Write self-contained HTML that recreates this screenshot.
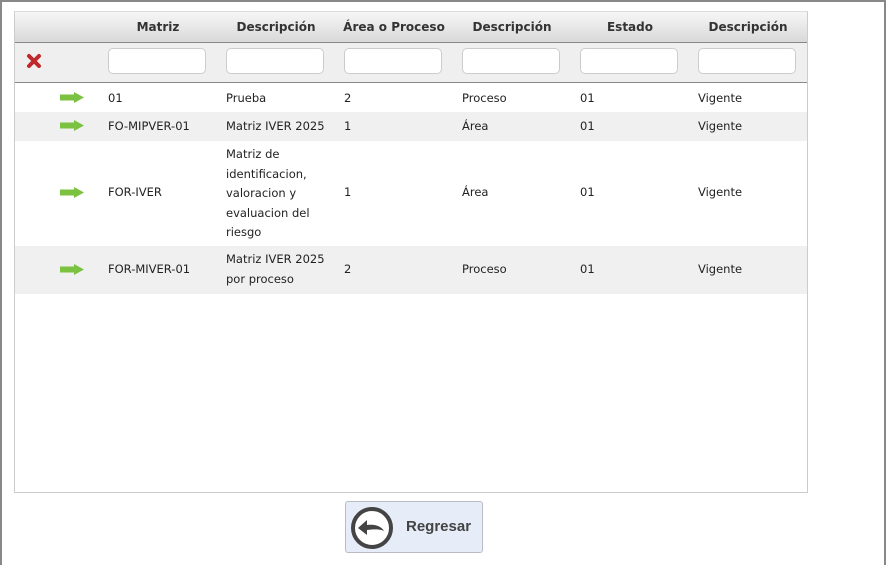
<!DOCTYPE html>
<html><head><meta charset="utf-8"><style>
*{box-sizing:border-box;margin:0;padding:0}
body{width:886px;height:565px;background:#fff;font-family:"DejaVu Sans",Verdana,sans-serif;font-size:11.5px;color:#222;position:relative;overflow:hidden}
.frame{position:absolute;left:0;top:0;width:886px;height:565px;border-top:2px solid #888;border-left:2px solid #888;border-right:2px solid #888}
.tbl{position:absolute;left:14px;top:11px;width:794px;height:482px;border:1px solid #ccc;border-top:1px solid #ddd}
.hdr{position:absolute;left:0;top:0;width:792px;height:31px;background:linear-gradient(#f6f6f6,#d9d9d9);border-bottom:1px solid #888}
.hdr span{position:absolute;top:8px;font-weight:bold;font-size:12px;color:#333;width:118px;text-align:center}
.flt{position:absolute;left:0;top:31px;width:792px;height:40px;background:#efefef;border-bottom:1px solid #888}
.flt .in{position:absolute;top:5px;width:98px;height:26px;background:#fff;border:1px solid #ccc;border-radius:5px}
.row{position:absolute;left:0;width:792px}
.row span{position:absolute;line-height:19.5px}
.g{background:#f0f0f0}
.arr{position:absolute;left:45px;width:24px;height:11px}
.btn{position:absolute;left:345px;top:501px;width:138px;height:52px;background:#e6ecf8;border:1px solid #b9bcc4;border-radius:3px}
.btn b{position:absolute;left:60px;top:16px;font-family:"Liberation Sans",Arial,sans-serif;font-size:15px;color:#444}
</style></head><body>
<div class="frame"></div>
<div class="tbl">
<div class="hdr">
<span style="left:84px">Matriz</span><span style="left:202px">Descripción</span><span style="left:320px">Área o Proceso</span><span style="left:438px">Descripción</span><span style="left:556px">Estado</span><span style="left:674px">Descripción</span>
</div>
<div class="flt">
<svg style="position:absolute;left:11px;top:10px" width="16" height="16" viewBox="0 0 16 16"><path d="M3 3L13 13M13 3L3 13" stroke="#c0282a" stroke-width="4" stroke-linecap="round"/></svg>
<div class="in" style="left:93px"></div><div class="in" style="left:211px"></div><div class="in" style="left:329px"></div><div class="in" style="left:447px"></div><div class="in" style="left:565px"></div><div class="in" style="left:683px"></div>
</div>
<div class="row" style="top:72px;height:28px">
<svg class="arr" style="top:8px" viewBox="0 0 24 11"><path d="M0 2.5H14V0L24 5.5L14 11V8.5H0Z" fill="#7bc241"/></svg>
<span style="left:93px;top:5px">01</span><span style="left:211px;top:5px">Prueba</span><span style="left:329px;top:5px">2</span><span style="left:447px;top:5px">Proceso</span><span style="left:565px;top:5px">01</span><span style="left:683px;top:5px">Vigente</span></div>
<div class="row g" style="top:100px;height:29px">
<svg class="arr" style="top:8px" viewBox="0 0 24 11"><path d="M0 2.5H14V0L24 5.5L14 11V8.5H0Z" fill="#7bc241"/></svg>
<span style="left:93px;top:5px">FO-MIPVER-01</span><span style="left:211px;top:5px">Matriz IVER 2025</span><span style="left:329px;top:5px">1</span><span style="left:447px;top:5px">Área</span><span style="left:565px;top:5px">01</span><span style="left:683px;top:5px">Vigente</span></div>
<div class="row" style="top:129px;height:105px">
<svg class="arr" style="top:46px" viewBox="0 0 24 11"><path d="M0 2.5H14V0L24 5.5L14 11V8.5H0Z" fill="#7bc241"/></svg>
<span style="left:93px;top:42px">FOR-IVER</span><span style="left:211px;top:4px;width:110px">Matriz de identificacion, valoracion y evaluacion del riesgo</span><span style="left:329px;top:42px">1</span><span style="left:447px;top:42px">Área</span><span style="left:565px;top:42px">01</span><span style="left:683px;top:42px">Vigente</span></div>
<div class="row g" style="top:234px;height:48px">
<svg class="arr" style="top:18px" viewBox="0 0 24 11"><path d="M0 2.5H14V0L24 5.5L14 11V8.5H0Z" fill="#7bc241"/></svg>
<span style="left:93px;top:14px">FOR-MIVER-01</span><span style="left:211px;top:4px;width:110px">Matriz IVER 2025 por proceso</span><span style="left:329px;top:14px">2</span><span style="left:447px;top:14px">Proceso</span><span style="left:565px;top:14px">01</span><span style="left:683px;top:14px">Vigente</span></div>
</div>
<div class="btn">
<svg style="position:absolute;left:4px;top:4px" width="44" height="44" viewBox="0 0 44 44"><circle cx="22" cy="22" r="19" fill="#fff" stroke="#444" stroke-width="4"/><path d="M8 22L17 14V19C25 18 31 20 34 25C30 23 25 23 17 24V29Z" fill="#444"/></svg>
<b>Regresar</b></div>
</body></html>
